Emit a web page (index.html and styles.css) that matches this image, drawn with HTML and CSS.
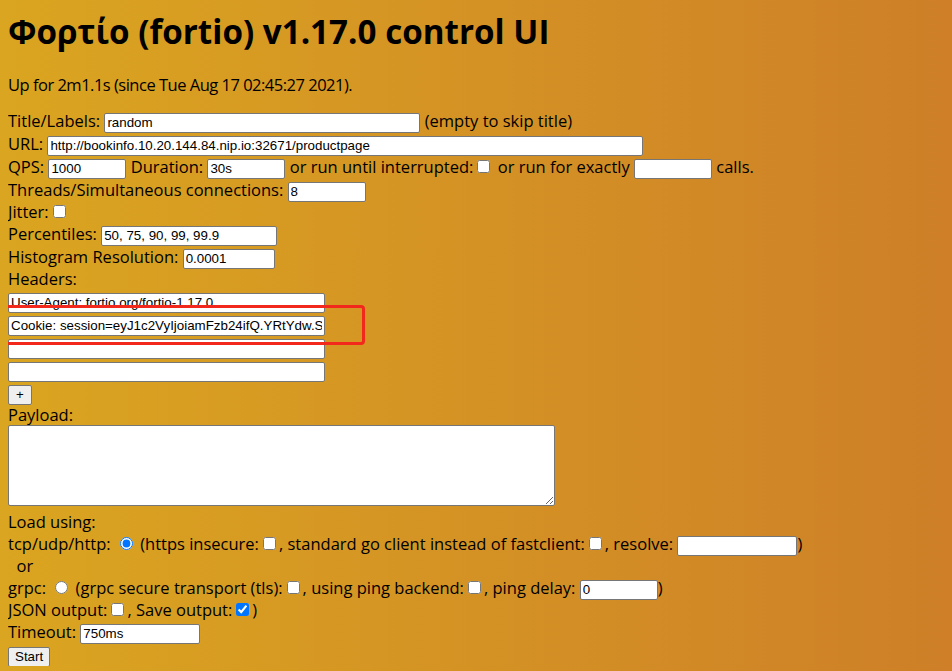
FILE: index.html
```html
<!DOCTYPE html>
<html>
<head>
<meta charset="utf-8">
<title>Φορτίο</title>
<link rel="stylesheet" href="styles.css">
</head>
<body>
<h1 class="title">Φορτίο (fortio) v1.17.0 control UI</h1>
<p class="uptime">Up for 2m1.1s (since Tue Aug 17 02:45:27 2021).</p>
<form class="form">
  <div class="row">Title/Labels: <input class="in w316" type="text" value="random"> (empty to skip title)</div>
  <div class="row">URL: <input class="in w596" type="text" value="http://bookinfo.10.20.144.84.nip.io:32671/productpage"></div>
  <div class="row">QPS: <input class="in w78" type="text" value="1000"> Duration: <input class="in w78" type="text" value="30s"> or run until interrupted:<input class="cb" type="checkbox"> or run for exactly <input class="in w78" type="text"> calls.</div>
  <div class="row">Threads/Simultaneous connections: <input class="in w78" type="text" value="8"></div>
  <div class="row t">Jitter:<input class="cb" type="checkbox"></div>
  <div class="row">Percentiles: <input class="in w176" type="text" value="50, 75, 90, 99, 99.9"></div>
  <div class="row">Histogram Resolution: <input class="in w92" type="text" value="0.0001"></div>
  <div class="row t">Headers:</div>
  <div class="headers">
    <div class="row"><input class="in w317" type="text" value="User-Agent: fortio.org/fortio-1.17.0"></div>
    <div class="row"><input class="in w317" type="text" value="Cookie: session=eyJ1c2VyIjoiamFzb24ifQ.YRtYdw.S"></div>
    <div class="row"><input class="in w317" type="text"></div>
    <div class="row"><input class="in w317" type="text"></div>
    <div class="highlight"></div>
  </div>
  <div class="row"><button class="btn plus" type="button">+</button></div>
  <div class="row t">Payload:</div>
  <div class="payload"><textarea class="ta"></textarea></div>
  <div class="row t">Load using:</div>
  <div class="row">tcp/udp/http: <input class="rb" type="radio" name="runner" checked> (https insecure:<input class="cb" type="checkbox">, standard go client instead of fastclient:<input class="cb" type="checkbox">, resolve: <input class="in w120" type="text">)</div>
  <div class="row t">&nbsp;&nbsp;or</div>
  <div class="row">grpc: <input class="rb" type="radio" name="runner"> (grpc secure transport (tls):<input class="cb" type="checkbox">, using ping backend:<input class="cb" type="checkbox">, ping delay: <input class="in w78" type="text" value="0">)</div>
  <div class="row t">JSON output:<input class="cb" type="checkbox">, Save output:<input class="cb" type="checkbox" checked>)</div>
  <div class="row">Timeout: <input class="in w120" type="text" value="750ms"></div>
  <div class="row"><button class="btn" type="submit">Start</button></div>
</form>
</body>
</html>
```
FILE: styles.css
```css
html {
  min-height: 100%;
  background: linear-gradient(to right, #daa520, #ce7f28);
}
body {
  margin: 8px;
  font-family: "Open Sans", "Noto Sans", sans-serif;
  font-size: 16.5px;
  color: #000;
}
.title {
  font-size: 33.2px;
  font-weight: bold;
  margin: 4px 0 0 0;
  line-height: 40px;
}
.uptime {
  margin: 22px 0 0 0;
  line-height: 21px;
  letter-spacing: -0.5px;
}
.form {
  margin-top: 14px;
}
.row {
  height: 23px;
  line-height: 23px;
  white-space: nowrap;
}
.row.t {
  height: 21px;
  line-height: 21px;
}
.in {
  box-sizing: border-box;
  height: 20px;
  font-family: "Liberation Sans", Arial, sans-serif;
  font-size: 13.333px;
  padding: 1px 2px;
  border: 1px solid #767676;
  border-radius: 2px;
  background: #fff;
  color: #000;
  vertical-align: baseline;
}
.w78 { width: 78px; }
.w92 { width: 92px; }
.w120 { width: 120px; }
.w176 { width: 176px; }
.w316 { width: 316px; }
.w317 { width: 317px; }
.w596 { width: 596px; }
.cb {
  width: 13px;
  height: 13px;
  margin: 3px 3px 3px 4px;
}
.rb {
  width: 13px;
  height: 13px;
  margin: 3px 3px 0 5px;
}
.headers {
  position: relative;
}
.highlight {
  position: absolute;
  left: -8px;
  top: 16px;
  width: 359px;
  height: 34px;
  border: 3.5px solid #f2281c;
  border-radius: 4px;
  pointer-events: none;
}
.btn {
  font-family: "Liberation Sans", Arial, sans-serif;
  font-size: 13.333px;
  height: 20px;
  padding: 1px 6px;
  border: 1px solid #767676;
  border-radius: 2px;
  background: #efefef;
  color: #000;
}
.plus {
  width: 24px;
  padding: 0;
}
.payload {
  padding: 0 0 5px 0;
}
.ta {
  display: block;
  box-sizing: border-box;
  width: 547px;
  height: 81px;
  margin: 0;
  border: 1px solid #767676;
  border-radius: 2px;
  background: #fff;
}
```
